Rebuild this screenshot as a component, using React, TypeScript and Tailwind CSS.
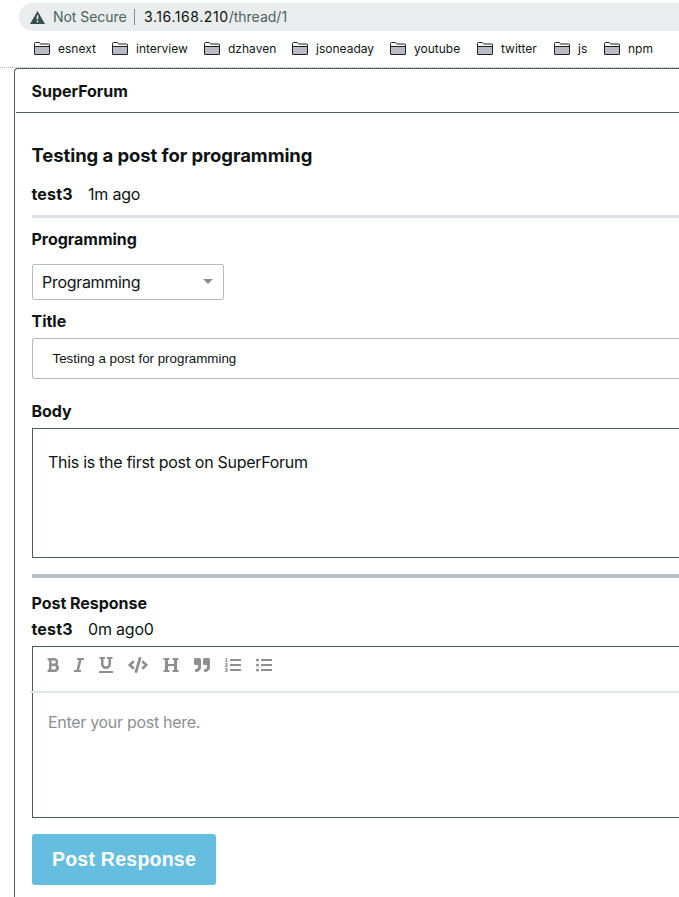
import type { ReactNode } from "react";
import {
  FaBold,
  FaCode,
  FaHeading,
  FaItalic,
  FaListOl,
  FaListUl,
  FaQuoteRight,
  FaUnderline,
} from "react-icons/fa";

const bookmarks = [
  { name: "esnext", width: "w-[78px]" },
  { name: "interview", width: "w-[92px]" },
  { name: "dzhaven", width: "w-[88px]" },
  { name: "jsoneaday", width: "w-[98px]" },
  { name: "youtube", width: "w-[87px]" },
  { name: "twitter", width: "w-[77px]" },
  { name: "js", width: "w-[50px]" },
  { name: "npm", width: "w-[50px]" },
];

function FolderIcon() {
  return (
    <svg width="16" height="13" viewBox="0 0 16 13" className="shrink-0" fill="none">
      <path d="M.5 12V1.5a1 1 0 0 1 1-1h3.7l1.6 1.5h7.7a1 1 0 0 1 1 1v9z" fill="#fff" stroke="#1c2222" />
      <path d="M1 5h14v7H1z" fill="#b9bac4" />
      <path d="M1 4.5h14M.5 12.5h15" stroke="#1c2222" />
    </svg>
  );
}

function WarningIcon() {
  return (
    <svg width="15" height="13" viewBox="0 0 15 13" className="shrink-0">
      <path d="M7.5 0 15 13H0z" fill="#34504a" />
      <path d="M6.7 4.3h1.6v4H6.7zM6.7 9.6h1.6v1.6H6.7z" fill="#e9eded" />
    </svg>
  );
}

function Browser() {
  return (
    <header className="h-[68px] border-b border-dotted border-[#a9b3b3] pt-[3px]">
      <div className="ml-[19px] flex h-7 items-center rounded-l-full bg-[#e9eded] pl-[11px] text-sm text-[#4b625d]">
        <WarningIcon />
        <span className="ml-2 w-[81px] tracking-[-0.04px]">Not Secure</span>
        <span className="h-4 w-px bg-[#87928f]" />
        <span className="ml-[9px] text-[#0c1110] tracking-[0.58px]">3.16.168.210</span>
        <span>/thread/1</span>
      </div>
      <nav className="flex h-[35px] items-center pl-[34px] text-xs text-[#101716]">
        {bookmarks.map((b) => (
          <div key={b.name} className={`flex shrink-0 items-center gap-2 ${b.width}`}>
            <FolderIcon />
            <span>{b.name}</span>
          </div>
        ))}
      </nav>
    </header>
  );
}

function Label({ children }: { children: ReactNode }) {
  return <h3 className="-ml-[0.5px] text-base leading-[22px] font-bold tracking-[-0.03px]">{children}</h3>;
}

function Byline({ user, time }: { user: string; time: string }) {
  return (
    <div className="-ml-[0.5px] flex gap-[15.5px] text-base leading-[22px]">
      <strong className="w-[41px] tracking-[0.15px]">{user}</strong>
      <span className="tracking-[-0.2px]">{time}</span>
    </div>
  );
}

function Toolbar() {
  return (
    <div className="flex h-11 items-center gap-[15px] pb-[8px] pl-[14px] text-[#8f8f8f]">
      <FaBold className="h-4 w-3" />
      <FaItalic className="h-4 w-2.5" />
      <FaUnderline className="h-4 w-3.5" />
      <FaCode className="h-4 w-5" />
      <FaHeading className="size-4" />
      <FaQuoteRight className="size-4" />
      <FaListOl className="size-4" />
      <FaListUl className="size-4" />
    </div>
  );
}

export default function App() {
  return (
    <div className="h-[897px] overflow-hidden bg-white font-[Inter,sans-serif] text-[#0e1413]">
      <Browser />
      <main className="ml-[14px] h-[829px] rounded-tl-[4px] border-t border-l border-[#46605a]">
        <div className="ml-px flex h-11 items-center border-b border-[#46605a] pt-px pl-4">
          <Label>SuperForum</Label>
        </div>
        <div className="pl-[17px]">
          <h2 className="mt-[30px] -ml-[0.5px] text-[18.5px] leading-6 font-bold tracking-[-0.08px]">
            Testing a post for programming
          </h2>
          <div className="mt-4">
            <Byline user="test3" time="1m ago" />
          </div>
          <hr className="mt-[10px] h-[3px] border-0 bg-[#dbe0e3]" />
          <div className="mt-[10px]">
            <Label>Programming</Label>
          </div>
          <div className="mt-[14px] flex h-9 w-48 items-center justify-between rounded-[2px] border border-[#b4b9c4] pr-[10px] pl-[9px] text-base tracking-[-0.3px]">
            <span className="pb-px">Programming</span>
            <span className="mb-px border-x-[5px] border-t-[5px] border-x-transparent border-t-[#8b9191]" />
          </div>
          <div className="mt-[10px]">
            <Label>Title</Label>
          </div>
          <div className="mt-[6px] flex h-[41px] items-center rounded-l-[3px] border border-r-0 border-[#b4b9c4] pl-[19.5px] font-['Liberation_Sans',Arial,sans-serif] text-[13.33px]">
            Testing a post for programming
          </div>
          <div className="mt-[21px]">
            <Label>Body</Label>
          </div>
          <div className="mt-[6px] h-[130px] border border-r-0 border-[#46605a] pt-[22px] pl-[15px] text-base leading-[22px] tracking-[-0.29px]">
            This is the first post on SuperForum
          </div>
          <hr className="mt-4 h-1 border-0 bg-[#b9becb]" />
          <div className="mt-[14px]">
            <Label>Post Response</Label>
          </div>
          <div className="mt-1">
            <Byline user="test3" time="0m ago0" />
          </div>
          <div className="mt-[6px] h-[172px] border border-r-0 border-[#46605a]">
            <Toolbar />
            <hr className="-ml-[3px] h-0.5 border-0 bg-[#e1e6e8]" />
            <p className="mt-[18px] pl-[15px] text-base leading-[22px] tracking-[-0.3px] text-[#8b8f93]">
              Enter your post here.
            </p>
          </div>
          <button className="mt-4 h-[51px] w-[184px] rounded-[3px] bg-[#65bee0] font-['Liberation_Sans',Arial,sans-serif] text-[19.5px] font-bold tracking-[0.25px] text-white">
            Post Response
          </button>
        </div>
      </main>
    </div>
  );
}
